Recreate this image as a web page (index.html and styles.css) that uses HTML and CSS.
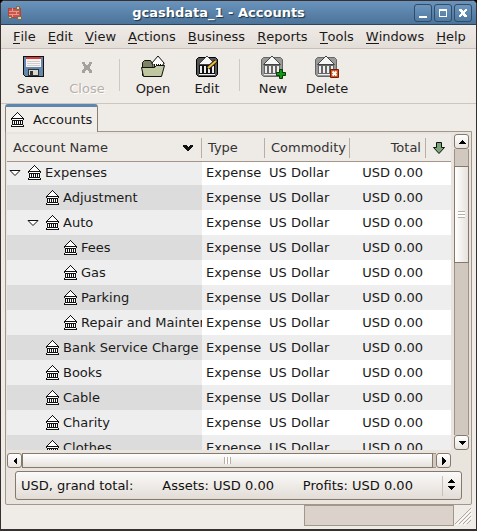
FILE: index.html
```html
<!DOCTYPE html>
<html lang="en">
<head>
<meta charset="utf-8">
<title>gcashdata_1 - Accounts</title>
<link rel="stylesheet" href="styles.css">
</head>
<body>
<svg class="defs" aria-hidden="true">
  <defs>
    <symbol id="bank" viewBox="0 0 14 16">
      <path d="M6 1h1v1h1v1h1v1h1v1h1v1h1v8H1V6h1V5h1V4h1V3h1V2h1z" fill="#fff"/>
      <path d="M6 0h1v1H6zM5 1h1v1H5zM7 1h1v1H7zM4 2h1v1H4zM8 2h1v1H8zM3 3h1v1H3zM9 3h1v1H9zM2 4h1v1H2zM10 4h1v1h-1zM1 5h1v1H1zM11 5h1v1h-1zM0 6h13v1H0z" fill="#111"/>
      <path d="M0 7h1v1H0zM12 7h1v1h-1zM1 8h11v1H1zM1 9h1v3H1zM3 9h1v3H3zM5 9h1v3H5zM7 9h1v3H7zM9 9h1v3H9zM11 9h1v3h-1zM1 12h11v1H1zM0 13h1v2H0zM12 13h1v2h-1zM0 14h13v1H0z" fill="#111"/>
    </symbol>
    <symbol id="vault" viewBox="0 0 24 24">
      <path class="vault-box" d="M3.500 2.500h17l2 2v15l-2 2h-17l-2-2v-15z"/>
      <path class="vault-gap" d="M4 10h16v9H4z"/>
      <path d="M3.500 9.500L12 1L20.500 9.500Z" fill="#f6f6f6" stroke="#444"/>
      <path d="M5 11h2v7H5zM9 11h2v7H9zM13 11h2v7h-2zM17 11h2v7h-2zM4 19h16v1H4z" fill="#eee"/>
    </symbol>
  </defs>
</svg>
<div class="window">
  <header class="titlebar">
    <svg class="app-icon" width="16" height="16" viewBox="0 0 16 16"><path d="M1 3h12v9H1z" fill="#c9564c" stroke="#b0443c"/><path d="M2 6h10M2 9h10M5 3v3M9 6v3M5 9v3" stroke="#e59a8c"/><path d="M9 1h3v3H9zM10 11h4v3h-4zM1 11h3v2H1z" fill="#d9ceb0" stroke="#77705c"/></svg>
    <h1>gcashdata_1 - Accounts</h1>
    <div class="win-buttons">
      <button aria-label="Minimize"><svg width="16" height="16"><path d="M4 11h8v2H4z" fill="#fff"/></svg></button>
      <button aria-label="Maximize"><svg width="16" height="16"><path d="M4 4h8v8H4zM5 6v5h6V6z" fill="#fff" fill-rule="evenodd"/></svg></button>
      <button aria-label="Close window"><svg width="16" height="16"><path d="M4 4h3v1h1v1h1V5h1V4h2v2h-1v1h-1v2h1v1h1v2h-3v-1H8v-1H7v1H6v1H4v-2h1V9h1V7H5V6H4z" fill="#fff"/></svg></button>
    </div>
  </header>
  <nav class="menubar">
    <button><u>F</u>ile</button><button><u>E</u>dit</button><button><u>V</u>iew</button><button><u>A</u>ctions</button><button><u>B</u>usiness</button><button><u>R</u>eports</button><button><u>T</u>ools</button><button><u>W</u>indows</button><button><u>H</u>elp</button>
  </nav>
  <div class="toolbar">
    <button class="tool"><svg width="24" height="24" viewBox="0 0 24 24"><path d="M2.500 1.500h20v20h-18l-2-2z" fill="#6388ab" stroke="#111"/><path d="M5 2h15v10H5z" fill="#f7f4f3"/><path d="M5 2h15v2H5z" fill="#d83a3a"/><path d="M6 6h13v1H6zM6 8h13v1H6zM6 10h13v1H6z" fill="#d5cbca"/><path d="M7.500 14.500h10v6h-10z" fill="#d8d8d0" stroke="#333"/><path d="M9 16h3v4H9z" fill="#333"/></svg>Save</button>
    <button class="tool close" disabled><svg width="24" height="24" viewBox="0 0 24 24"><path d="M7 7h3v2h1v1h2V9h1V7h3v2h-1v2h-1v3h1v1h1v3h-3v-2h-1v-1h-2v1h-1v2H7v-3h1v-1h1v-3H8V9H7z" fill="#a5a29e"/></svg>Close</button>
    <span class="sep"></span>
    <button class="tool"><svg class="smooth" width="26" height="24" viewBox="0 0 26 24"><path d="M2.500 20.500v-13l2-2h6l2 3h9v12z" fill="#7d8464" stroke="#111"/><path d="M12 8L18 1L24 8V9H23V13H13V9H12Z" fill="#fff" stroke="#111"/><path d="M14.500 9v4M16.500 9v4M18.500 9v4M20.500 9v4" stroke="#111"/><path d="M1.500 12.500h13l2-2h8l-3 11h-18z" fill="#bfc7a0" stroke="#111"/></svg>Open</button>
    <button class="tool edit"><svg class="smooth" width="24" height="24"><use href="#vault"/><path d="M13 13L21 6" stroke="#222" stroke-width="4"/><path d="M13 13L21 6" stroke="#f1bd35" stroke-width="2"/></svg>Edit</button>
    <span class="sep"></span>
    <button class="tool new"><svg class="smooth" width="26" height="24"><use href="#vault" width="24" height="24"/><path d="M19.500 14.500h3v3h3v3h-3v3h-3v-3h-3v-3h3z" fill="#159515" stroke="#063d06"/></svg>New</button>
    <button class="tool delete"><svg class="smooth" width="26" height="24"><use href="#vault" width="24" height="24"/><path d="M16.500 14.500h8v8h-8z" fill="#d3511f" stroke="#702000"/><path d="M18.500 16.500L22.500 20.500M22.500 16.500L18.500 20.500" stroke="#fff" stroke-width="2"/></svg>Delete</button>
  </div>
  <div class="tabs"><button class="tab"><svg width="14" height="16"><use href="#bank"/></svg>Accounts</button></div>
  <main class="page">
    <div class="scroller">
      <div class="view">
        <table>
          <colgroup><col class="c-name"><col class="c-type"><col class="c-comm"><col class="c-total"><col></colgroup>
          <thead><tr>
            <th class="name">Account Name<svg width="10" height="6" viewBox="0 0 10 6"><path d="M0 0h3l2 2l2-2h3v2L5 6L0 2z"/></svg></th>
            <th>Type</th><th>Commodity</th><th class="num">Total</th>
            <th class="more"><button aria-label="Choose columns"><svg class="smooth" width="14" height="14" viewBox="0 0 14 14"><path d="M4.500 1.500h5v5h3L7 12.500L1.500 6.500h3z" fill="#78a678" stroke="#111"/></svg></button></th>
          </tr></thead>
          <tbody id="rows"></tbody>
        </table>
      </div>
      <div class="vbar">
        <button aria-label="Scroll up"><svg width="8" height="4"><path d="M4 0L8 4H0z"/></svg></button>
        <div class="trough"><div class="thumb"></div></div>
        <button aria-label="Scroll down"><svg width="8" height="4"><path d="M0 0H8L4 4z"/></svg></button>
      </div>
      <div class="hbar">
        <button aria-label="Scroll left"><svg width="4" height="8"><path d="M4 0V8L0 4z"/></svg></button>
        <div class="trough"><div class="thumb"></div></div>
        <button aria-label="Scroll right"><svg width="4" height="8"><path d="M0 0V8L4 4z"/></svg></button>
      </div>
    </div>
    <div class="summary">
      <select aria-label="Totals"><option>USD, grand total:&nbsp;&nbsp;&nbsp;&nbsp;&nbsp;&nbsp;&nbsp;Assets: USD 0.00&nbsp;&nbsp;&nbsp;&nbsp;&nbsp;&nbsp;&nbsp;Profits: USD 0.00</option></select>
      <svg class="spin" width="8" height="12" viewBox="0 0 8 12"><path d="M4 0L8 4H0zM0 7H8L4 11z"/></svg>
    </div>
  </main>
  <footer class="status">
    <div class="progress"></div>
    <svg class="smooth" width="17" height="17" viewBox="0 0 17 17"><path d="M0 16L16 0M4 16L16 4M8 16L16 8M12 16L16 12" stroke="#b5a99f"/><path d="M1 17L17 1M5 17L17 5M9 17L17 9" stroke="#fff"/></svg>
  </footer>
</div>
<script src="rows.js"></script>
</body>
</html>
```
FILE: rows.js
```js
const accounts = [
  ["Expenses", 0, true], ["Adjustment", 1], ["Auto", 1, true], ["Fees", 2], ["Gas", 2],
  ["Parking", 2], ["Repair and Maintenance", 2], ["Bank Service Charge", 1],
  ["Books", 1], ["Cable", 1], ["Charity", 1], ["Clothes", 1]
];
document.getElementById("rows").innerHTML = accounts.map(([name, level, open]) => `
  <tr><td class="name"><div class="node level-${level}">
    ${open ? '<button class="toggle" aria-label="Collapse"><svg class="smooth" width="12" height="8" viewBox="0 0 12 8"><path d="M1 1.500H11L6 6.500z" fill="#fff" stroke="#111"/></svg></button>' : '<span class="toggle"></span>'}
    <svg width="14" height="16"><use href="#bank"/></svg><span class="label">${name}</span></div></td>
  <td>Expense</td><td>US Dollar</td><td class="num">USD 0.00</td><td></td></tr>`).join("");
```
FILE: styles.css
```css
* { box-sizing: border-box; }
html, body { margin: 0; height: 100%; background: #000; }
body { font: 13px/16px "DejaVu Sans", sans-serif; color: #1a1a1a; }
button { margin: 0; padding: 0; border: 0; background: none; font: inherit; color: inherit; }
svg { display: block; flex: none; shape-rendering: crispEdges; }
.smooth { shape-rendering: auto; }
.defs { position: absolute; width: 0; height: 0; }
.window { height: 100vh; display: flex; flex-direction: column; background: #efebe7; border: 1px solid #38302f; border-bottom-width: 2px; border-radius: 5px 5px 0 0; overflow: hidden; }

.titlebar { height: 24px; flex: none; display: flex; align-items: center; padding: 0 4px 0 6px; background: linear-gradient(#6a94bd, #4c7399); border-bottom: 1px solid #2b435b; }
.titlebar h1 { flex: 1; margin: 0; text-align: center; font-size: 13px; line-height: 16px; color: #fff; text-shadow: 1px 1px 1px #1d3247; }
.win-buttons { display: flex; gap: 2px; }
.win-buttons button { width: 18px; height: 18px; border: 1px solid #2f4c69; border-radius: 3px; background: linear-gradient(#6c96be, #507aa2); }

.menubar { height: 24px; flex: none; display: flex; gap: 12px; padding: 0 12px; align-items: center; background: linear-gradient(#efebe7, #e4ded8); border-bottom: 1px solid #c9bfb6; }
.menubar button { flex: none; white-space: nowrap; }
.menubar u { display: inline-block; line-height: 13px; text-decoration: none; border-bottom: 1px solid #1a1a1a; }

.toolbar { height: 55px; flex: none; display: flex; align-items: flex-start; padding: 6px 5px 0; border-bottom: 1px solid #cdc6bf; }
.tool { display: flex; flex-direction: column; align-items: center; gap: 2px; width: 54px; }
.tool:disabled { color: #b5b0aa; text-shadow: 1px 1px #fff; }
.sep { width: 1px; height: 32px; margin: 4px 6px 0 5px; background: #cfc8c1; }
.tool { --box: #999; --edge: #666; --gap: #666; }
.edit { --box: #555; --edge: #000; --gap: #111; }
.vault-box { fill: var(--box); stroke: var(--edge); }
.vault-gap { fill: var(--gap); }

.tabs { height: 28px; flex: none; padding: 0 4px; display: flex; position: relative; z-index: 1; }
.tab { display: flex; align-items: center; gap: 8px; height: 28px; padding: 0 5px; border: 1px solid #8c7f74; border-top: 3px solid #5d87b0; border-bottom: 0; border-radius: 3px 3px 0 0; background: #f1eeea; }

.page { flex: 1; min-height: 0; margin: -1px 4px 0; padding: 2px 1px 4px; display: flex; flex-direction: column; border: 1px solid #a3968b; border-radius: 0 0 2px 2px; background: #eae4de; }
.scroller { flex: 1; min-height: 0; display: grid; grid-template-columns: 1fr 15px; grid-template-rows: 1fr 15px; gap: 3px; padding-right: 1px; }
.view { overflow: hidden; background: #fff; min-width: 0; min-height: 0; }
table { width: 100%; table-layout: fixed; border-collapse: separate; border-spacing: 0; }
.c-name { width: 195px; } .c-type { width: 63px; } .c-comm { width: 85px; } .c-total { width: 76px; }
th { height: 28px; padding: 0 5px 0 6px; text-align: left; font-weight: normal; color: #333; background: linear-gradient(90deg, #b9aea5, #b9aea5) right 4px / 1px 20px no-repeat #eeeae6; border-bottom: 1px solid #a3968b; white-space: nowrap; }
th svg { fill: #111; }
th.name svg { float: right; margin: 5px 4px 0 0; }
th.more { padding: 0; background: #eeeae6; }
th.more button { display: block; margin: 0 auto; }
td { height: 25px; padding: 0 4px; white-space: nowrap; overflow: hidden; }
tbody tr:first-child td { height: 23px; padding-bottom: 2px; }
tbody tr:nth-child(odd) .name { background: #eee; }
tbody tr:nth-child(even) { background: #eee; }
tbody tr:nth-child(even) .name { background: #dcdcdc; }
.num { text-align: right; }
td.num { padding-right: 3px; }
td.name { padding: 0 0 0 2px; }
.node { display: flex; align-items: center; gap: 3px; }
.label { min-width: 0; overflow: hidden; }
.toggle { flex: none; width: 16px; }
.level-1 { padding-left: 18px; } .level-2 { padding-left: 36px; }

.vbar, .hbar { display: flex; }
.vbar { flex-direction: column; }
.vbar button, .hbar button { width: 15px; height: 15px; flex: none; display: grid; place-items: center; border: 1px solid #85786d; border-radius: 3px; background: linear-gradient(#fff, #e9e4df); }
.trough { flex: 1; display: flex; background: #d1c8c0; border: 1px solid #9e9187; }
.vbar .trough { border-width: 0 1px; flex-direction: column; padding-top: 17px; margin: 0; }
.hbar .trough { border-width: 1px 0; padding-right: 3px; }
.thumb { border: 1px solid #85786d; }
.vbar .thumb { height: 36%; margin: 0 -1px; background: repeating-linear-gradient(#b9aea5 0 1px, #fff 1px 3px) center / 7px 7px no-repeat, linear-gradient(90deg, #fff, #e6e1dc); }
.hbar .thumb { flex: 1; margin: -1px 0; background: repeating-linear-gradient(90deg, #b9aea5 0 1px, #fff 1px 3px) center / 7px 7px no-repeat, linear-gradient(#fff, #e6e1dc); }

.summary { position: relative; margin: 3px 8px 0; }
select { appearance: none; display: block; width: 100%; height: 29px; padding: 0 5px; font: inherit; color: #111; border: 1px solid #85786d; border-radius: 3px; background: linear-gradient(90deg, #c9c0b8, #c9c0b8) right 18px center / 1px 20px no-repeat, linear-gradient(#fbfaf9, #e2dcd6); }
.spin { position: absolute; right: 7px; top: 8px; }

.status { flex: none; height: 24px; display: flex; justify-content: flex-end; align-items: flex-start; gap: 1px; padding: 0 4px; }
.progress { width: 150px; height: 21px; border: 1px solid #a3968b; background: #dbd2cc; }
.status svg { margin-top: 3px; }
```
